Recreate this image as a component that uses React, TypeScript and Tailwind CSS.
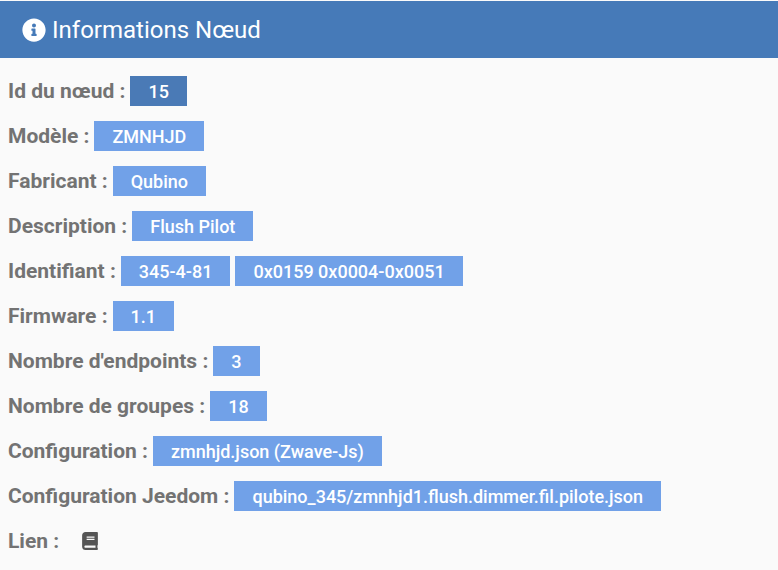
import React from "react";
import { FaBook, FaInfoCircle } from "react-icons/fa";

const rows = [
  { label: "Id du nœud", values: ["15"], primary: true },
  { label: "Modèle", values: ["ZMNHJD"] },
  { label: "Fabricant", values: ["Qubino"] },
  { label: "Description", values: ["Flush Pilot"] },
  { label: "Identifiant", values: ["345-4-81", "0x0159 0x0004-0x0051"] },
  { label: "Firmware", values: ["1.1"] },
  { label: "Nombre d'endpoints", values: ["3"] },
  { label: "Nombre de groupes", values: ["18"] },
  { label: "Configuration", values: ["zmnhjd.json (Zwave-Js)"] },
  { label: "Configuration Jeedom", values: ["qubino_345/zmnhjd1.flush.dimmer.fil.pilote.json"] },
];

export default function App() {
  return (
    <section className="min-h-screen bg-[#fafafa] pt-px font-['Roboto',sans-serif] text-[#737373]">
      <h1 className="flex h-[57px] items-center gap-1.5 bg-[#467ab8] px-[22px] text-2xl text-white">
        <FaInfoCircle aria-hidden="true" />
        Informations Nœud
      </h1>

      <dl className="px-2 pt-2.5">
        {rows.map((row) => (
          <div key={row.label} className="flex h-[45px] items-center gap-[5px]">
            <dt className="pt-0.5 text-[21px] font-bold">{row.label} :</dt>
            {row.values.map((value) => (
              <dd
                key={value}
                className={`flex h-[30px] items-center px-[18px] pt-0.5 text-lg font-medium text-white ${
                  row.primary ? "bg-[#4a7ab6]" : "bg-[#71a1e8]"
                }`}
              >
                {value}
              </dd>
            ))}
          </div>
        ))}
        <div className="flex h-[45px] items-center gap-[22px]">
          <dt className="pt-0.5 text-[21px] font-bold">Lien :</dt>
          <dd>
            <a href="#documentation" aria-label="Documentation" className="block text-lg text-[#555555]">
              <FaBook />
            </a>
          </dd>
        </div>
      </dl>
    </section>
  );
}
